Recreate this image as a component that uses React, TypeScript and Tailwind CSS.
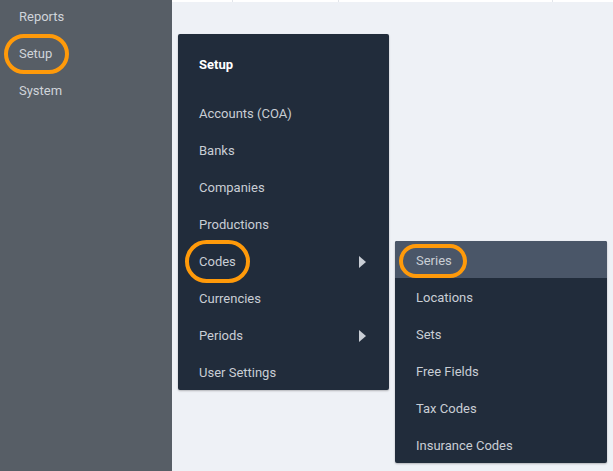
const SIDEBAR = ["Reports", "Setup", "System"];

const SETUP_ITEMS: Array<{ label: string; sub?: boolean }> = [
  { label: "Accounts (COA)" },
  { label: "Banks" },
  { label: "Companies" },
  { label: "Productions" },
  { label: "Codes", sub: true },
  { label: "Currencies" },
  { label: "Periods", sub: true },
  { label: "User Settings" },
];

const CODE_ITEMS = ["Series", "Locations", "Sets", "Free Fields", "Tax Codes", "Insurance Codes"];

function Caret() {
  return (
    <svg width="7" height="12" viewBox="0 0 7 12" className="fill-[#c9ced5]">
      <path d="M0 0 L7 6 L0 12 Z" />
    </svg>
  );
}

function Ring({ className }: { className: string }) {
  return (
    <div
      className={`pointer-events-none absolute rounded-full border-[4px] border-[#ff9a0a] ${className}`}
    />
  );
}

export default function App() {
  return (
    <div
      className="relative flex h-[471px] w-[613px] overflow-hidden bg-[#eef1f6] text-[13px]"
      style={{ fontFamily: "Roboto, 'Noto Sans', sans-serif" }}
    >
      {/* left nav */}
      <aside className="flex w-[172px] shrink-0 flex-col bg-[#575e66] pl-[19px]">
        <div className="-mt-[2px]">
          {SIDEBAR.map((s) => (
            <div key={s} className="flex h-[37px] items-center pt-[1px] text-[#d0d4da]">
              {s}
            </div>
          ))}
        </div>
      </aside>

      {/* page body */}
      <main className="relative flex-1">
        <div className="flex h-[2px] bg-white">
          <div className="w-[61px] border-r border-[#e3e6eb]" />
          <div className="w-[106px] border-r border-[#e3e6eb]" />
          <div className="w-[214px] border-r border-[#e3e6eb]" />
        </div>

        {/* setup menu */}
        <div className="absolute left-[6px] top-[34px] w-[211px] rounded-[2px] bg-[#212c3b] shadow-[0_1px_2px_rgba(0,0,0,0.25)]">
          <div className="flex h-[60px] items-center pl-[21px] pt-[2px] font-bold text-white">Setup</div>
          {SETUP_ITEMS.map((it) => (
            <div
              key={it.label}
              className="flex h-[37px] items-center justify-between pl-[21px] pr-[23px] pt-[3px] text-[#c9ced5]"
            >
              <span>{it.label}</span>
              {it.sub && <Caret />}
            </div>
          ))}
        </div>

        {/* codes submenu */}
        <div className="absolute left-[223px] top-[241px] w-[212px] overflow-hidden rounded-[2px] bg-[#212c3b] shadow-[0_1px_2px_rgba(0,0,0,0.25)]">
          {CODE_ITEMS.map((c, i) => (
            <div
              key={c}
              className={`flex h-[37px] items-center pl-[21px] pt-[3px] text-[#c9ced5] ${i === 0 ? "bg-[#4a5668]" : ""}`}
            >
              {c}
            </div>
          ))}
        </div>
      </main>

      {/* annotation rings */}
      <Ring className="left-[4px] top-[34px] h-[40px] w-[65px]" />
      <Ring className="left-[185px] top-[240px] h-[43px] w-[65px]" />
      <Ring className="left-[399px] top-[244px] h-[34px] w-[68px]" />
    </div>
  );
}
